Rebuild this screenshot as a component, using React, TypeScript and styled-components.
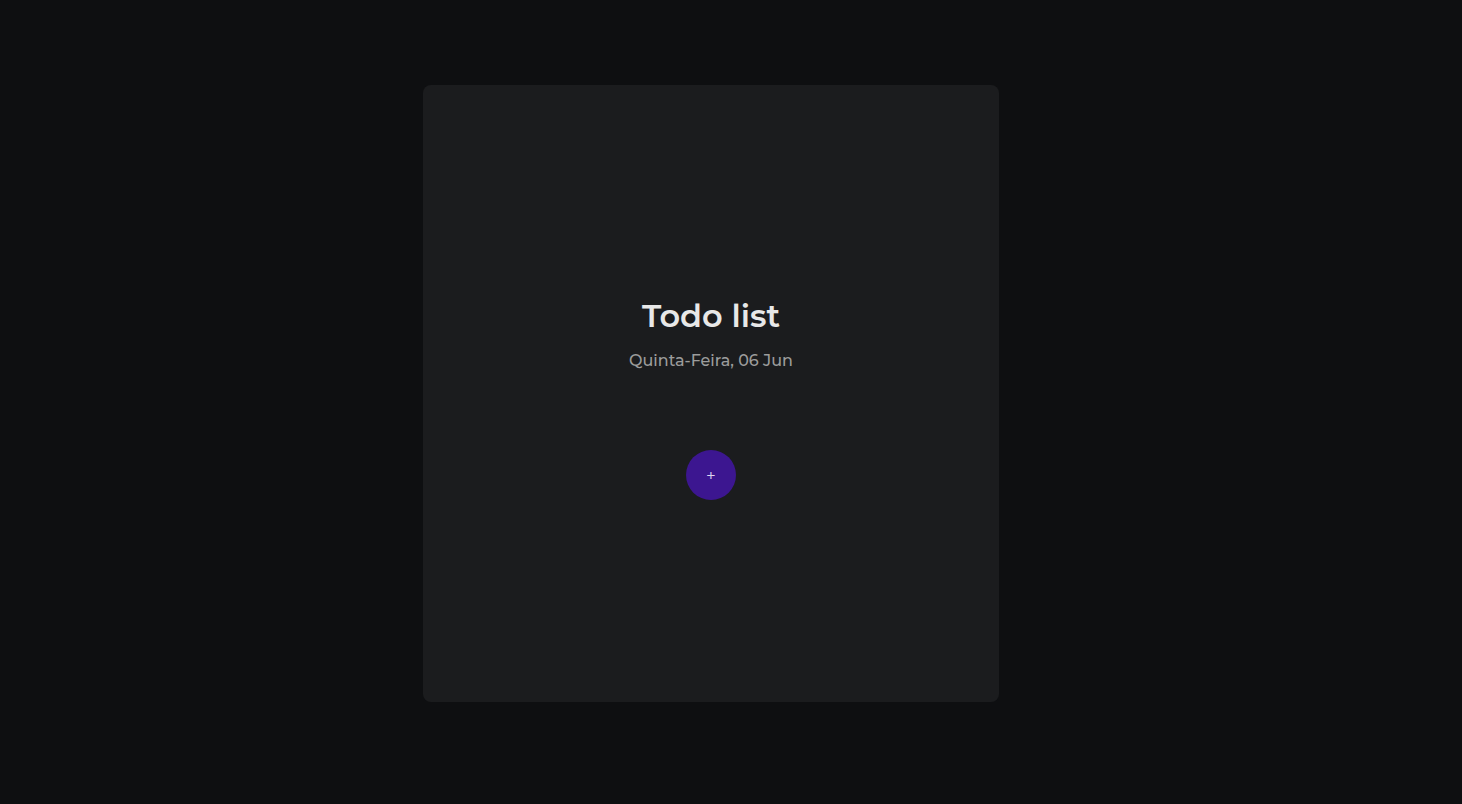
import React from "react";
import styled, { createGlobalStyle } from "styled-components";

const Global = createGlobalStyle`
  html, body { margin: 0; padding: 0; background: #0e0f11; }
  body { font-family: "Montserrat", "Open Sans", "Noto Sans", sans-serif; }
`;

const Page = styled.main`
  min-height: 804px;
  display: flex;
  justify-content: center;
  padding: 85px 40px 0 0;
  box-sizing: border-box;
`;

const Card = styled.section`
  width: 576px;
  height: 617px;
  background: #1b1c1e;
  border-radius: 8px;
  display: flex;
  flex-direction: column;
  align-items: center;
  padding-top: 211px;
  box-sizing: border-box;
`;

const Title = styled.h1`
  margin: 0;
  font-size: 32px;
  line-height: 40px;
  font-weight: 600;
  color: #e8e8e8;
`;

const Subtitle = styled.p`
  margin: 15px 0 0;
  font-size: 16px;
  line-height: 20px;
  font-weight: 500;
  color: #9c9c9c;
`;

const AddButton = styled.button`
  margin-top: 79px;
  width: 50px;
  height: 50px;
  border-radius: 50%;
  border: none;
  background: #3c1690;
  color: #ddd6f0;
  font-size: 17px;
  line-height: 1;
  font-family: inherit;
  cursor: pointer;
  display: flex;
  align-items: center;
  justify-content: center;
  padding: 0;
`;

export default function App() {
  return (
    <>
      <Global />
      <Page>
        <Card>
          <Title>Todo list</Title>
          <Subtitle>Quinta-Feira, 06 Jun</Subtitle>
          <AddButton aria-label="Adicionar">+</AddButton>
        </Card>
      </Page>
    </>
  );
}
